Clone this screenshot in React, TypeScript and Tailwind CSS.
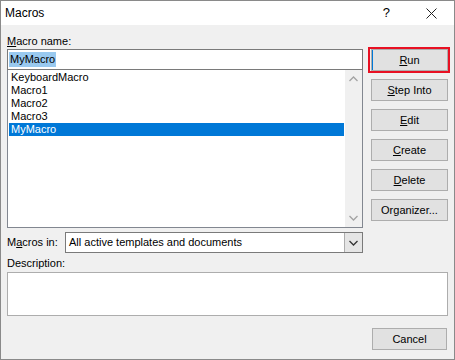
const font = { fontFamily: '"Liberation Sans", Arial, sans-serif' };

function Chevron({ up, color }: { up?: boolean; color: string }) {
  return (
    <svg width="9" height="6" viewBox="0 0 9 6">
      <path d={up ? "M0.5 5 L4.5 1 L8.5 5" : "M0.5 1 L4.5 5 L8.5 1"} fill="none" stroke={color} strokeWidth="1.3" />
    </svg>
  );
}

function Btn({ children }: { children: React.ReactNode }) {
  return (
    <button className="h-[22px] w-full border border-[#adadad] bg-[#e1e1e1] text-[11px] leading-none text-black">
      {children}
    </button>
  );
}

const macros = ["KeyboardMacro", "Macro1", "Macro2", "Macro3", "MyMacro"];

export default function App() {
  return (
    <div
      style={font}
      className="flex h-[360px] w-[455px] flex-col border border-[#8a8a8a] bg-[#f0f0f0] text-[11px] text-black"
    >
      {/* title bar */}
      <div className="flex h-[24px] items-center bg-white pl-[4px]">
        <span className="text-[12px]">Macros</span>
        <span className="ml-auto mr-[36px] text-[13px]">?</span>
        <svg width="11" height="11" viewBox="0 0 11 11" className="mr-[17px]">
          <path d="M0.5 0.5 L10.5 10.5 M10.5 0.5 L0.5 10.5" stroke="#222" strokeWidth="1" />
        </svg>
      </div>

      <div className="flex flex-1 flex-col px-[6px] pt-[8px]">
        <div className="flex gap-[8px]">
          {/* left column */}
          <div className="flex w-[356px] flex-col">
            <div className="h-[16px] leading-[16px]">
              <span className="underline">M</span>acro name:
            </div>
            <div className="flex h-[21px] items-center border border-[#7a7a7a] bg-white px-[1px]">
              <span className="bg-[#99c9ef] px-[1px] leading-[15px]">MyMacro</span>
            </div>
            <div className="flex h-[158px] border border-t-0 border-[#828790] bg-white">
              <div className="flex-1 pt-[1px]">
                {macros.map((m) => (
                  <div
                    key={m}
                    className={
                      "mx-[1px] h-[13px] pl-[2px] leading-[13px] " +
                      (m === "MyMacro" ? "bg-[#0078d7] text-white" : "")
                    }
                  >
                    {m}
                  </div>
                ))}
              </div>
              <div className="flex w-[17px] flex-col items-center justify-between bg-[#f0f0f0] py-[6px]">
                <Chevron up color="#a3a3a3" />
                <Chevron color="#a3a3a3" />
              </div>
            </div>
          </div>

          {/* right column */}
          <div className="flex w-[77px] flex-col gap-[8px] pt-[16px]">
            <div className="relative">
              <Btn>
                <span className="underline">R</span>un
              </Btn>
              <div className="absolute -inset-[2px] -left-[3px] border-[2px] border-[#e81123]" />
              <div className="absolute left-[1px] top-[1px] h-[20px] w-px bg-[#0078d7]" />
            </div>
            <Btn>
              <span className="underline">S</span>tep Into
            </Btn>
            <Btn>
              <span className="underline">E</span>dit
            </Btn>
            <Btn>
              <span className="underline">C</span>reate
            </Btn>
            <Btn>
              <span className="underline">D</span>elete
            </Btn>
            <Btn>
              Or<span className="underline">g</span>anizer...
            </Btn>
          </div>
        </div>

        {/* macros in */}
        <div className="mt-[4px] flex w-[356px] items-center">
          <span className="w-[58px]">
            M<span className="underline">a</span>cros in:
          </span>
          <div className="flex h-[21px] flex-1 items-center border border-[#7a7a7a] bg-white">
            <span className="flex-1 pl-[3px]">All active templates and documents</span>
            <div className="flex h-full w-[18px] items-center justify-center border-l border-[#adadad] bg-[#e5e5e5]">
              <Chevron color="#333" />
            </div>
          </div>
        </div>

        <div className="mt-[2px] h-[16px] leading-[16px]">Description:</div>
        <div className="mt-px h-[44px] w-full border border-[#adadad] bg-white" />

        <div className="mt-[12px] flex justify-end">
          <div className="mr-px w-[75px]">
            <Btn>Cancel</Btn>
          </div>
        </div>
      </div>
    </div>
  );
}
